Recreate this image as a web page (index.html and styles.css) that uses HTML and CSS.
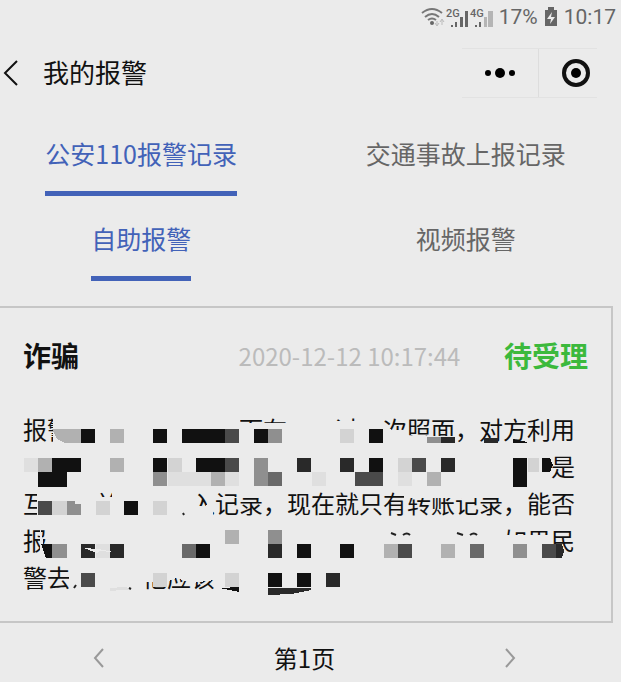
FILE: index.html
```html
<!DOCTYPE html>
<html lang="zh-CN">
<head>
  <meta charset="UTF-8">
  <meta name="viewport" content="width=device-width, initial-scale=1">
  <title>我的报警</title>
  <link rel="stylesheet" href="styles.css">
</head>
<body>
  <div class="status-bar">
    <svg class="signal" width="72" height="22" viewBox="0 0 72 22">
      <g fill="none" stroke="#777" stroke-width="2">
        <path d="M1 7Q11-1 21 7M4 11Q11 5 18 11M7 14Q11 11 15 14"/>
      </g>
      <circle cx="11" cy="17" r="2" fill="#666"/>
      <path d="M16 15v4M14 17l2 3 2-3M21 19v-5M19 16l2-3 2 3" fill="none" stroke="#bbb"/>
      <text x="25" y="11">2G</text>
      <text x="49" y="11">4G</text>
      <path d="M30 21v-2h2v2zM34 21v-5h2v5zM39 21V11h3v10zM44 21V5h3v16zM54 21v-2h2v2zM58 21v-5h2v5z" fill="#666"/>
      <path d="M63 21V11h3v10zM67 21V5h5v16z" fill="#b5b5b5"/>
    </svg>
    <span>17%</span>
    <svg class="battery" width="14" height="20" viewBox="0 0 14 20">
      <path d="M4 0h6v3h3v16H1V3h3z" fill="#666"/>
      <path d="M8 5l-5 7h4l-1 5 5-7H7z" fill="#ebebeb"/>
    </svg>
    <span>10:17</span>
  </div>

  <header class="nav">
    <button class="back" aria-label="返回">
      <svg width="16" height="28" viewBox="0 0 16 28"><path d="M14 2L2 14l12 12" fill="none" stroke="#111" stroke-width="2"/></svg>
    </button>
    <h1>我的报警</h1>
    <div class="capsule">
      <button aria-label="更多">
        <svg width="32" height="12" viewBox="0 0 32 12"><circle cx="4" cy="6" r="3"/><circle cx="16" cy="6" r="5"/><circle cx="28" cy="6" r="3"/></svg>
      </button>
      <button aria-label="关闭">
        <svg width="30" height="30" viewBox="0 0 30 30"><circle cx="15" cy="15" r="12" fill="none" stroke="#111" stroke-width="4"/><circle cx="15" cy="15" r="5"/></svg>
      </button>
    </div>
  </header>

  <nav class="tabs">
    <button class="tab active">公安110报警记录</button>
    <button class="tab">交通事故上报记录</button>
    <button class="tab active">自助报警</button>
    <button class="tab">视频报警</button>
  </nav>

  <main>
    <article class="card">
      <div class="card-head">
        <h2>诈骗</h2>
        <time datetime="2020-12-12T10:17:44">2020-12-12 10:17:44</time>
        <strong class="state">待受理</strong>
      </div>
      <div class="detail">
        <p>报警　　　　　　　而在　　过一次照面，对方利用<br>　　　　　　　　　　　　　　　　　　　　　　是<br>互　　关　　　入记录，现在就只有转账记录，能否<br>报　　　　　　　　　　　　　　　　　　　如果民<br>警去　　　他应该</p>
        <!-- mosaic over the private parts of the report -->
        <svg class="mosaic" width="552" height="185" viewBox="23 410 552 185" shape-rendering="crispEdges">
          <g fill="#ebebeb">
            <path d="M53 417H238V415H240V423H316V421H384V426L392 430H403L410 436H455V446H53z"/>
            <path d="M37 490H94V497H112V490H190V506H206L213 497H240V494H262V498H213V520H190V510L186 519H37z"/>
            <path d="M404 490H503V498H404z"/>
            <path d="M40 527L44 546V560H40zM500 535H553V556H500z"/>
            <path d="M69 566H215V580L192 583L176 578L166 582H144V594H69z"/>
          </g>
          <g fill="#111">
            <path d="M81 429h14v14H81zM153 429h14v14h-14zM182 429h43v14h-43zM254 429h14v14h-14zM369 429h14v14h-14z"/>
            <path d="M52 458h29v14H67v15H38v-15h14zM153 458h14v14h-14zM196 458h29v14h-29zM369 458h14v14h-14zM513 458h14v29h-14zM542 458h8l3 7-3 7h-8z"/>
            <path d="M124 501h14v14h-14zM41 544h11v14h-6zM196 544h14v14h-14zM297 544h14v14h-14zM340 544h14v14h-14z"/>
            <path d="M268 573h14v14h-14zM297 573h14v14h-14zM220 588l19-1v5z"/>
            <path d="M513 439l14 3v1h-14z"/>
          </g>
          <g fill="#292929">
            <path d="M441 437h14v6h-14zM484 438h14v5h-14zM297 458h14v14h-14zM340 458h14v14h-14zM441 458h14v14h-14z"/>
            <path d="M81 544h14v14H81zM110 544h14v14h-14zM268 544h14v14h-14zM556 544h6l2 7-2 7h-6z"/>
            <path d="M326 573h14v14h-14zM268 588h43v2l-20 4-23 1z"/>
          </g>
          <g fill="#4a4a4a">
            <path d="M225 429h14v14h-14zM225 458h14v14h-14zM412 458h14v14h-14zM355 472h28v14h-28zM38 501h14v14H38z"/>
            <path d="M398 544h14v14h-14zM542 544h14v14h-14zM81 573h14v14H81z"/>
          </g>
          <g fill="#696969">
            <path d="M268 472h14v14h-14zM182 544h14v14h-14zM470 544h14v14h-14z"/>
          </g>
          <g fill="#8f8f8f">
            <path d="M268 429h14v14h-14zM427 437h14v6h-14zM153 472h14v14h-14zM254 458h14v28h-14zM67 501h8v3h6v11H67z"/>
            <path d="M268 530h14v14h-14zM52 544h15v14H52zM513 544h14v14h-14z"/>
          </g>
          <g fill="#b1b1b1">
            <path d="M52 429h29v14H65l-8-4zM110 429h14v14h-14zM38 458h14v14H38zM110 458h14v14h-14zM211 472h14v14h-14zM427 472h14v14h-14z"/>
            <path d="M225 530h14v14h-14zM384 544h14v14h-14zM441 544h14v14h-14z"/>
          </g>
          <g fill="#d3d3d3">
            <path d="M340 429h14v14h-14zM168 458h14v14h-14zM398 458h14v14h-14zM528 458h11v14h-11zM96 501h14v14H96zM153 501h14v14h-14zM52 501h15v14H52z"/>
            <path d="M153 573h14v14h-14zM225 573h14v14h-14z"/>
          </g>
          <g fill="#dfdfdf">
            <path d="M24 458h14v14H24zM168 472h43v14h-43zM225 472h14v14h-14zM312 472h14v14h-14zM398 472h14v14h-14zM96 544h14v14H96zM110 588l14-1 10 2-24 2z"/>
          </g>
          <g fill="none" stroke="#222" stroke-width="2" shape-rendering="auto">
            <path d="M391 533l5 2M403 535q4-3 7 0M457 533l6 2M470 535q4-3 7 0"/>
            <path d="M74 588l2-3M129 588l2 1M183 513l1 2"/>
          </g>
          <path d="M84 548l14 1 15 3-14-1-2 2z" fill="#ebebeb"/>
        </svg>
      </div>
    </article>
  </main>

  <footer class="pager">
    <button aria-label="上一页">
      <svg width="12" height="20" viewBox="0 0 12 20"><path d="M10 1L2 10l8 9" fill="none" stroke="#999" stroke-width="2"/></svg>
    </button>
    <span>第1页</span>
    <button aria-label="下一页">
      <svg width="12" height="20" viewBox="0 0 12 20"><path d="M2 1l8 9-8 9" fill="none" stroke="#999" stroke-width="2"/></svg>
    </button>
  </footer>
</body>
</html>
```
FILE: styles.css
```css
* {
  box-sizing: border-box;
}

body {
  margin: 0;
  background-color: #ebebeb;
  color: #111;
  font-family: "Noto Sans CJK SC", sans-serif;
  font-size: 24px;
}

button {
  padding: 0;
  border: none;
  background: none;
  color: inherit;
  font: inherit;
  cursor: pointer;
}

svg {
  display: block;
}

h1, h2, p {
  margin: 0;
}

.status-bar {
  display: flex;
  justify-content: flex-end;
  align-items: center;
  gap: 6px;
  height: 34px;
  padding-right: 5px;
  color: #666;
  font-family: Roboto, sans-serif;
  font-size: 21px;
}

.signal text {
  fill: #666;
  font-size: 11px;
  font-weight: 500;
}

.nav {
  display: flex;
  align-items: center;
  height: 78px;
  padding: 0 24px 0 3px;
}

.nav h1 {
  margin-left: 24px;
  padding-bottom: 4px;
  font-size: 26px;
  font-weight: 400;
}

.capsule {
  display: flex;
  align-items: center;
  margin-left: auto;
  border-top: 1px solid #e2e2e2;
  border-bottom: 1px solid #e2e2e2;
}

.capsule button {
  display: flex;
  align-items: center;
  justify-content: center;
  height: 48px;
  padding: 0 22px;
}

.capsule button + button {
  padding: 0 6px 0 22px;
  border-left: 1px solid #ddd;
}

.tabs {
  display: grid;
  grid-template-columns: 10fr 11fr;
  column-gap: 28px;
  row-gap: 20px;
  justify-items: center;
  padding-top: 19px;
}

.tab {
  height: 65px;
  padding-bottom: 16px;
  border-bottom: 5px solid transparent;
  color: #666;
  font-size: 25px;
}

.tab.active {
  border-bottom-color: #4262b8;
  color: #4262b8;
}

.card {
  margin: 25px 8px 0 0;
  padding: 25px 23px 26px;
  border: 2px solid #c6c6c6;
  border-left: none;
}

.card-head {
  display: flex;
  align-items: center;
  justify-content: space-between;
  height: 44px;
}

.card-head h2,
.state {
  font-size: 28px;
  font-weight: 700;
}

.card-head time {
  margin-left: 116px;
  color: #bbb;
}

.state {
  color: #3cb93c;
}

.detail {
  position: relative;
  margin-top: 33px;
}

.detail p {
  line-height: 37px;
  white-space: nowrap;
}

.mosaic {
  position: absolute;
  top: 0;
  left: 0;
}

.pager {
  display: flex;
  align-items: center;
  justify-content: space-between;
  padding: 17px 105px 0 93px;
}
```
